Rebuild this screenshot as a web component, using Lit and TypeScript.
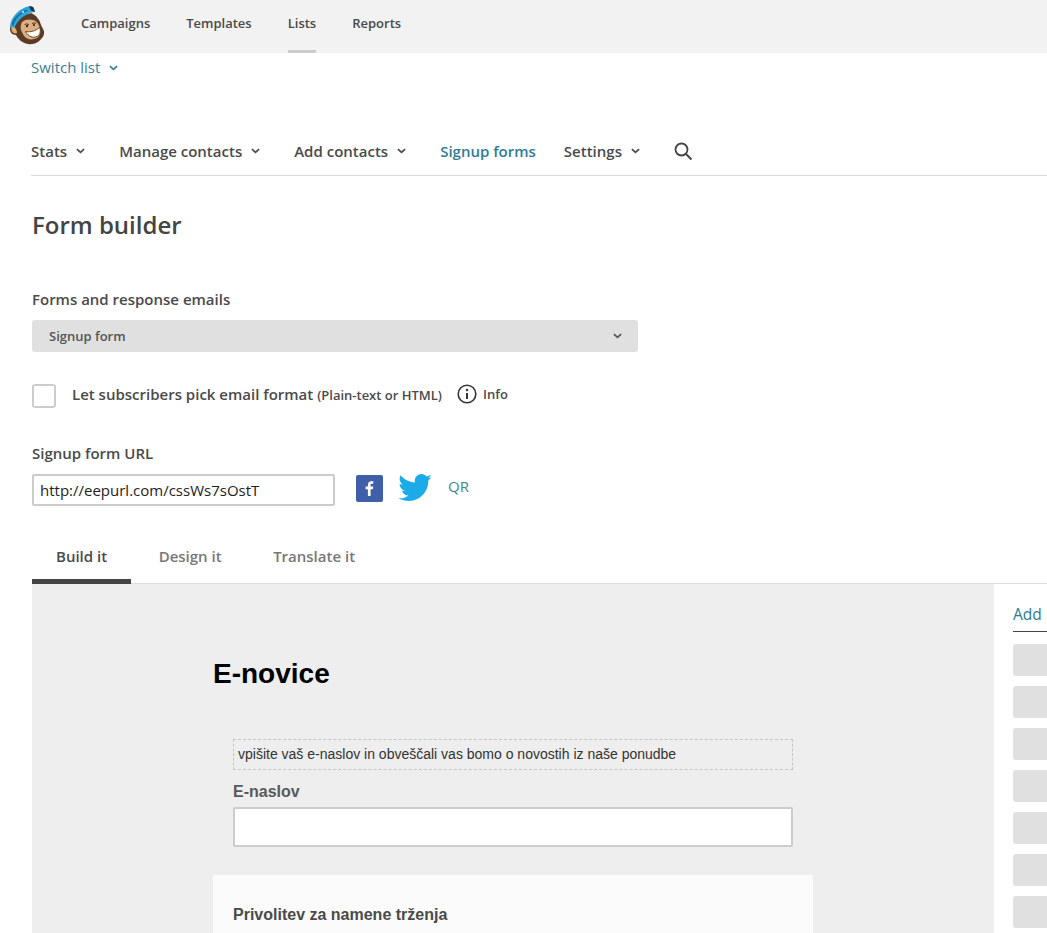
import { LitElement, html, css, svg } from "lit";
import { customElement } from "lit/decorators.js";

const chev = () => html`<svg class="chev" viewBox="0 0 10 6" width="9" height="6"><path d="M1 1l4 3.6L9 1" fill="none" stroke="currentColor" stroke-width="1.9"/></svg>`;

const logo = svg`<svg width="38" height="40" viewBox="0 0 38 40">
  <path d="M23 8c5 2 9 7 10 12l2 4c2 3 1 7-1 9-3 4-8 7-14 6-6-1-10-5-12-9-4 0-6-3-6-6s2-5 5-5l3-7z" fill="#5b3a26"/>
  <path d="M2 21C3 12 11 3 22 1c2 0 3 1 4 2l1 4c-3 0-6 1-9 3-6 3-10 8-12 14-2 1-4-1-4-3z" fill="#2ba6dc"/>
  <path d="M3.500 20C5 13 11 7 19 4.500l.7 1.600C13 8 7.500 13 5.500 20.500z" fill="#1b6e98"/>
  <path d="M21 1l4 1 2 5-4-1.500z" fill="#20303e"/>
  <circle cx="15" cy="7" r="1" fill="#e8e8e8"/>
  <path d="M14 17c3-3 8-3 11-2 4 1 6 4 7 9 1 4 0 7-3 9-4 2-9 2-12-1-2-2-3-5-4-7-1-3 0-6 1-8z" fill="#dcae80"/>
  <path d="M17.500 26.500c5 1 10-.5 14-4 1.500 3 .8 7-2 8.800-4 2.200-9 .5-12-4.800z" fill="#fff" stroke="#5b3a26" stroke-width=".9"/>
  <path d="M6 22c-2.200 0-3.200 2-2.200 4s3.200 3 5.200 2c0-2-1-5-3-6z" fill="#dcae80"/>
  <path d="M16.500 19.500q2.500-1.500 4.500.2M24 18.500q2-1.300 4 0" stroke="#5b3a26" stroke-width="1" fill="none"/>
  <circle cx="19" cy="21" r="1.200" fill="#3a2415"/>
  <circle cx="26" cy="20" r="1.100" fill="#3a2415"/>
</svg>`;

@customElement("app-root")
export class AppRoot extends LitElement {
  static styles = css`
    :host { display: block; width: 1047px; height: 933px; overflow: hidden; background: #fff;
      font-family: "Open Sans", sans-serif; color: #444; }
    * { box-sizing: border-box; }
    .top { height: 53px; background: #f2f2f2; display: flex; align-items: flex-start; padding-left: 8px; }
    .logo { margin-top: 5px; width: 38px; height: 40px; }
    .logo svg { display: block; }
    .topnav { display: flex; gap: 36px; margin-left: 35px; font-size: 13px; font-weight: 600; color: #4a4a4a; }
    .topnav span { height: 53px; padding-top: 13px; line-height: 20px; }
    .topnav .on { border-bottom: 3px solid #ccc; }
    .switch { margin-left: 31px; height: 29px; display: flex; align-items: center; gap: 9px; font-size: 15px; color: #3c8093; }
    .switch .text { line-height: 29px; }
    .subnav { margin: 49px 0 0 31px; height: 45px; padding-bottom: 4px; border-bottom: 1px solid #d9d9d9; display: flex; align-items: center; font-size: 15px; font-weight: 600; color: #4a4a4a; }
    .subnav .item { display: flex; align-items: center; gap: 9px; margin-right: 34px; }
    .subnav .item.link { color: #2f7c93; margin-right: 28px; }
    .subnav .search { margin-left: -1px; }
    h1 { margin: 32px 0 0 32px; font-size: 24px; line-height: 34px; font-weight: 600; color: #444; }
    .label { font-size: 15px; font-weight: 600; color: #4a4a4a; line-height: 20px; }
    .forms { margin: 47px 0 0 32px; }
    .select { margin-top: 11px; width: 606px; height: 32px; background: #e0e0e0; border-radius: 3px; display: flex; align-items: center; justify-content: space-between; padding: 0 16px 0 17px; font-size: 13px; font-weight: 600; color: #555; }
    .check { margin: 32px 0 0 32px; display: flex; align-items: center; height: 24px; }
    .box { width: 24px; height: 24px; border: 2px solid #ccc; border-radius: 3px; background: #fff; }
    .check .t { margin: 0 0 4px 16px; font-size: 15px; font-weight: 600; color: #4a4a4a; line-height: 20px; }
    .check small { font-size: 13px; font-weight: 600; }
    .info { margin: 0 0 4px 15px; display: flex; align-items: center; gap: 6px; font-size: 13px; font-weight: 600; color: #4a4a4a; }
    .url { margin: 35px 0 0 32px; }
    .urlrow { margin-top: 11px; display: flex; align-items: flex-start; }
    .input { width: 303px; height: 32px; border: 2px solid #ccc; border-radius: 2px; padding-left: 6px; font-size: 15px; line-height: 28px; color: #222; background: #fff; }
    .fb { margin: 1px 0 0 21px; width: 27px; height: 27px; background: #3f5fa8; border-radius: 2px; display: block; }
    .tw { margin: 0 0 0 15px; display: block; }
    .qr { margin-left: 16px; font-size: 15px; line-height: 24px; color: #3f8a8c; }
    .tabs { margin: 33px 0 0 32px; height: 45px; display: flex; border-bottom: 1px solid #ddd; font-size: 15px; font-weight: 600; color: #777; }
    .tab { padding: 0 24px; line-height: 34px; height: 45px; margin-right: 3.500px; }
    .tab.on { color: #4a4a4a; border-bottom: 5px solid #444; }
    .main { margin-left: 32px; height: 349px; display: flex; }
    .canvas { width: 962px; background: #eeeeee; padding: 0 0 0 181px; }
    .side { flex: 1; padding: 18px 0 0 19px; overflow: hidden; }
    .side .add { height: 30px; border-bottom: 1px solid #444; font-size: 15.5px; line-height: 24px; color: #2a7a96; font-weight: 500; margin-bottom: 12px; }
    .side .b { height: 32px; background: #e0e0e0; border-radius: 3px 0 0 3px; margin-bottom: 10px; }
    .enovice { margin: 71px 0 0 0; font: bold 28px/38px "Liberation Sans", sans-serif; color: #000; }
    .fields { margin: 46px 0 0 20px; width: 560px; font-family: "Liberation Sans", sans-serif; }
    .dashed { height: 31px; border: 1px dashed #c6c6c6; font-size: 14px; line-height: 29px; padding-left: 4px; color: #333; }
    .fl { margin-top: 12px; font-weight: bold; font-size: 16px; line-height: 20px; color: #595959; }
    .fi { margin-top: 5px; height: 40px; border: 2px solid #ccc; border-radius: 2px; background: #fff; }
    .card { margin-top: 28px; width: 600px; height: 80px; background: #fbfbfb; padding: 30px 20px 0; font: bold 16px/20px "Liberation Sans", sans-serif; color: #4a4a4a; }
  `;

  render() {
    return html`
      <div class="top">
        <div class="logo">${logo}</div>
        <div class="topnav">
          <span>Campaigns</span><span>Templates</span><span class="on">Lists</span><span>Reports</span>
        </div>
      </div>
      <div class="switch"><span class="text">Switch list</span>${chev()}</div>
      <div class="subnav">
        <div class="item">Stats ${chev()}</div>
        <div class="item">Manage contacts ${chev()}</div>
        <div class="item">Add contacts ${chev()}</div>
        <div class="item link">Signup forms</div>
        <div class="item">Settings ${chev()}</div>
        <svg class="search" width="20" height="20" viewBox="0 0 20 20"><circle cx="8.5" cy="8.5" r="6" fill="none" stroke="#444" stroke-width="1.8"/><path d="M13 13l5.5 5.5" stroke="#444" stroke-width="2" fill="none"/></svg>
      </div>
      <h1>Form builder</h1>
      <div class="forms">
        <div class="label">Forms and response emails</div>
        <div class="select"><span>Signup form</span>${chev()}</div>
      </div>
      <div class="check">
        <div class="box"></div>
        <div class="t">Let subscribers pick email format <small>(Plain-text or HTML)</small></div>
        <div class="info">
          <svg width="20" height="20" viewBox="0 0 20 20"><circle cx="10" cy="10" r="8.8" fill="none" stroke="#333" stroke-width="1.6"/><circle cx="10" cy="6" r="1.2" fill="#333"/><path d="M10 9v6" stroke="#333" stroke-width="2"/></svg>
          <span>Info</span>
        </div>
      </div>
      <div class="url">
        <div class="label">Signup form URL</div>
        <div class="urlrow">
          <div class="input">http://eepurl.com/cssWs7sOstT</div>
          <svg class="fb" viewBox="0 0 27 27"><path d="M14.6 21v-6.7h2.3l.4-2.7h-2.7V10c0-.8.2-1.3 1.3-1.3h1.4V6.300c-.3 0-1.100-.1-2-.1-2 0-3.400 1.200-3.400 3.500v1.900H9.600v2.700h2.300V21z" fill="#fff"/></svg>
          <svg class="tw" width="34" height="28" viewBox="0 0 24 20"><path d="M24 2.400c-.9.400-1.800.7-2.800.8 1-.6 1.800-1.600 2.200-2.700-.9.600-2 1-3.100 1.200C19.400.7 18.100 0 16.700 0c-2.700 0-4.900 2.200-4.900 4.900 0 .4 0 .8.100 1.100C7.800 5.800 4.100 3.900 1.700.9c-.4.700-.7 1.600-.7 2.500 0 1.700.9 3.200 2.200 4.100-.8 0-1.600-.2-2.200-.6v.1c0 2.400 1.700 4.400 3.900 4.800-.4.100-.8.200-1.300.2-.3 0-.6 0-.9-.1.600 2 2.400 3.400 4.600 3.400-1.700 1.300-3.800 2.100-6.100 2.100-.4 0-.8 0-1.200-.1C2.200 18.300 4.800 19.200 7.500 19.200c9.100 0 14-7.500 14-14v-.6c1-.7 1.800-1.500 2.500-2.200z" fill="#1cabe9"/></svg>
          <span class="qr">QR</span>
        </div>
      </div>
      <div class="tabs">
        <div class="tab on">Build it</div>
        <div class="tab">Design it</div>
        <div class="tab">Translate it</div>
      </div>
      <div class="main">
        <div class="canvas">
          <div class="enovice">E-novice</div>
          <div class="fields">
            <div class="dashed">vpišite vaš e-naslov in obveščali vas bomo o novostih iz naše ponudbe</div>
            <div class="fl">E-naslov</div>
            <div class="fi"></div>
          </div>
          <div class="card">Privolitev za namene trženja</div>
        </div>
        <div class="side">
          <div class="add">Add</div>
          <div class="b"></div><div class="b"></div><div class="b"></div><div class="b"></div><div class="b"></div><div class="b"></div><div class="b"></div>
        </div>
      </div>
    `;
  }
}
